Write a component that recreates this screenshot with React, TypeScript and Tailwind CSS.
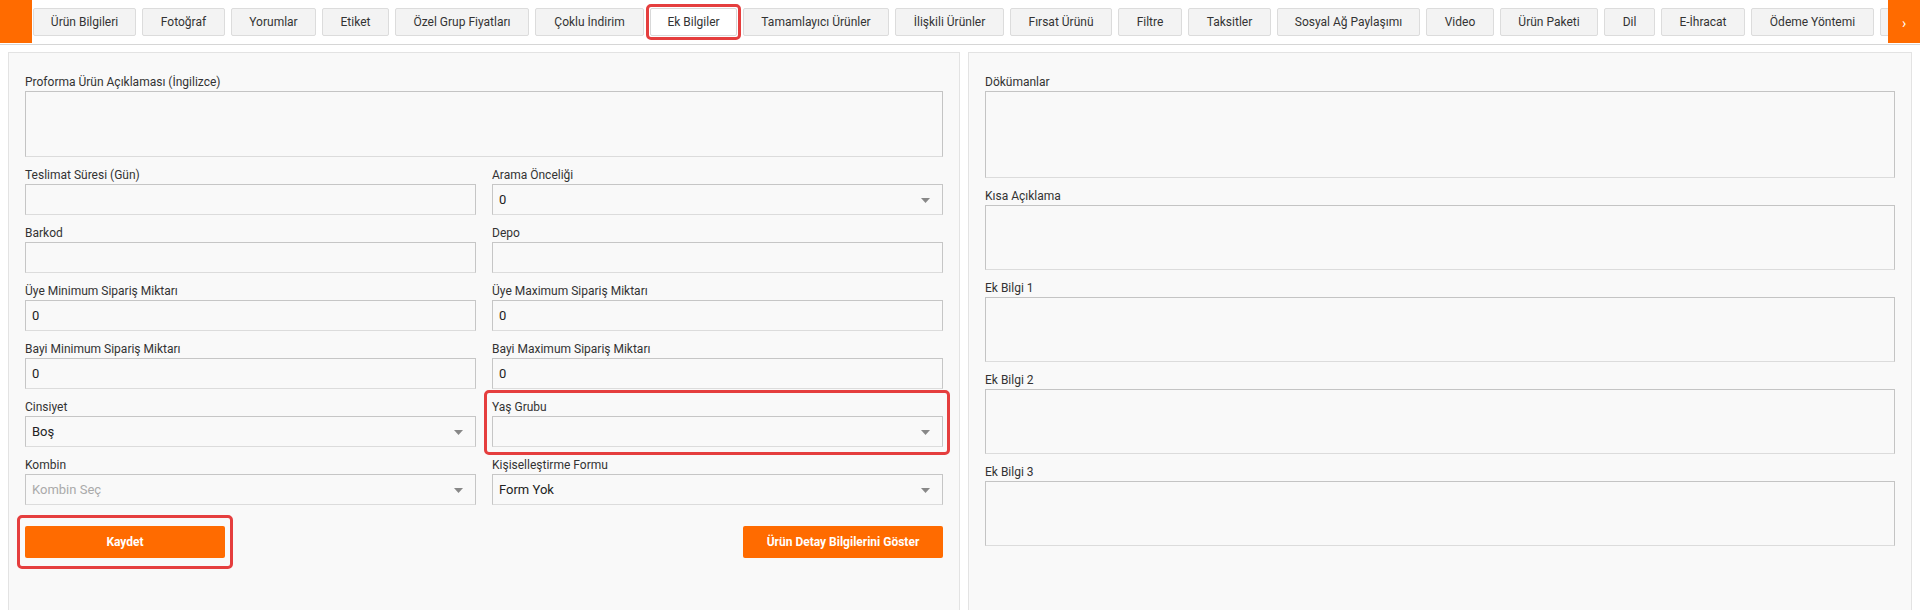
import React from "react";

const tabs: { t: string; w: number; active?: boolean }[] = [
  { t: "Ürün Bilgileri", w: 103 },
  { t: "Fotoğraf", w: 83 },
  { t: "Yorumlar", w: 85 },
  { t: "Etiket", w: 67 },
  { t: "Özel Grup Fiyatları", w: 134 },
  { t: "Çoklu İndirim", w: 109 },
  { t: "Ek Bilgiler", w: 87, active: true },
  { t: "Tamamlayıcı Ürünler", w: 146 },
  { t: "İlişkili Ürünler", w: 109 },
  { t: "Fırsat Ürünü", w: 102 },
  { t: "Filtre", w: 64 },
  { t: "Taksitler", w: 83 },
  { t: "Sosyal Ağ Paylaşımı", w: 143 },
  { t: "Video", w: 68 },
  { t: "Ürün Paketi", w: 98 },
  { t: "Dil", w: 51 },
  { t: "E-İhracat", w: 84 },
  { t: "Ödeme Yöntemi", w: 123 },
  { t: "", w: 80 },
];

const font = { fontFamily: "Roboto, 'Noto Sans', Arial, sans-serif" };

function Caret() {
  return (
    <svg width="9" height="5" viewBox="0 0 9 5" className="absolute right-[12px] top-[13px]">
      <path d="M0 0 L9 0 L4.5 5 Z" fill="#888" />
    </svg>
  );
}

function Label({ children }: { children: React.ReactNode }) {
  return <div className="h-[17px] text-[12px] leading-[17px] text-[#333] whitespace-nowrap">{children}</div>;
}

function Input({ value, select, placeholder }: { value?: string; select?: boolean; placeholder?: boolean }) {
  return (
    <div className="relative h-[31px] border border-[#c6c6c6] border-b-[#dcdcdc] flex items-center px-[6px] text-[13px]">
      <span className={placeholder ? "text-[#aaa]" : "text-[#222]"}>{value}</span>
      {select && <Caret />}
    </div>
  );
}

function Field({ label, value, select, placeholder }: { label: string; value?: string; select?: boolean; placeholder?: boolean }) {
  return (
    <div className="mb-[10px]">
      <Label>{label}</Label>
      <Input value={value} select={select} placeholder={placeholder} />
    </div>
  );
}

function Area({ label, h }: { label: string; h: number }) {
  return (
    <div className="mb-[10px]">
      <Label>{label}</Label>
      <div
        className="border border-[#c4c4c4] border-b-[#dcdcdc]"
        style={{ height: h }}
      />
    </div>
  );
}

export default function App() {
  return (
    <div className="w-[1920px] h-[610px] overflow-hidden bg-white" style={font}>
      {/* Tab bar */}
      <div className="flex h-[45px] border-b border-[#d6d6d6]">
        <div className="w-[32px] h-[43px] bg-[#ff6b00] shrink-0" />
        <div className="flex-1 overflow-hidden">
          <div className="flex gap-[6px] pl-[1px] pt-[8px]">
            {tabs.map((tab, i) => (
              <div key={i} className="relative shrink-0" style={{ width: tab.w }}>
                <div
                  className={
                    "h-[28px] flex items-center justify-center border rounded-[2px] text-[12px] text-[#333] whitespace-nowrap " +
                    (tab.active ? "bg-white border-[#d8d8d8]" : "bg-[#f3f3f3] border-[#dcdcdc]")
                  }
                >
                  {tab.t}
                </div>
                {tab.active && (
                  <div className="absolute -left-[4px] -right-[4px] -top-[4px] -bottom-[4px] border-[3px] border-[#e53e3e] rounded-[5px]" />
                )}
              </div>
            ))}
          </div>
        </div>
        <div className="w-[32px] h-[43px] bg-[#ff6b00] shrink-0 flex items-center justify-center text-white text-[14px] pt-[4px]">
          ›
        </div>
      </div>

      {/* Panels */}
      <div className="flex gap-[8px] px-[8px] pt-[7px]">
        <div className="w-[952px] h-[570px] shrink-0 border border-[#e3e3e3] bg-[#f9f9f9] px-[16px] pt-[21px]">
          <Area label="Proforma Ürün Açıklaması (İngilizce)" h={66} />
          <div className="grid grid-cols-2 gap-x-[16px]">
            <Field label="Teslimat Süresi (Gün)" />
            <Field label="Arama Önceliği" value="0" select />
            <Field label="Barkod" />
            <Field label="Depo" />
            <Field label="Üye Minimum Sipariş Miktarı" value="0" />
            <Field label="Üye Maximum Sipariş Miktarı" value="0" />
            <Field label="Bayi Minimum Sipariş Miktarı" value="0" />
            <Field label="Bayi Maximum Sipariş Miktarı" value="0" />
            <Field label="Cinsiyet" value="Boş" select />
            <div className="relative">
              <div className="absolute -left-[8px] -right-[7px] -top-[9px] bottom-[2px] border-[3px] border-[#e53e3e] rounded-[5px] pointer-events-none" />
              <Field label="Yaş Grubu" select />
            </div>
            <Field label="Kombin" value="Kombin Seç" select placeholder />
            <Field label="Kişiselleştirme Formu" value="Form Yok" select />
          </div>
          <div className="flex justify-between mt-[11px]">
            <div className="relative">
              <div className="absolute -left-[8px] -right-[8px] -top-[11px] -bottom-[11px] border-[3px] border-[#e53e3e] rounded-[5px]" />
              <button className="w-[200px] h-[32px] bg-[#ff6b00] text-white text-[12px] font-bold rounded-[2px]">
                Kaydet
              </button>
            </div>
            <button className="w-[200px] h-[32px] bg-[#ff6b00] text-white text-[12px] font-bold rounded-[2px]">
              Ürün Detay Bilgilerini Göster
            </button>
          </div>
        </div>
        <div className="w-[944px] h-[570px] shrink-0 border border-[#e3e3e3] bg-[#f9f9f9] px-[16px] pt-[21px]">
          <Area label="Dökümanlar" h={87} />
          <Area label="Kısa Açıklama" h={65} />
          <Area label="Ek Bilgi 1" h={65} />
          <Area label="Ek Bilgi 2" h={65} />
          <Area label="Ek Bilgi 3" h={65} />
        </div>
      </div>
    </div>
  );
}
